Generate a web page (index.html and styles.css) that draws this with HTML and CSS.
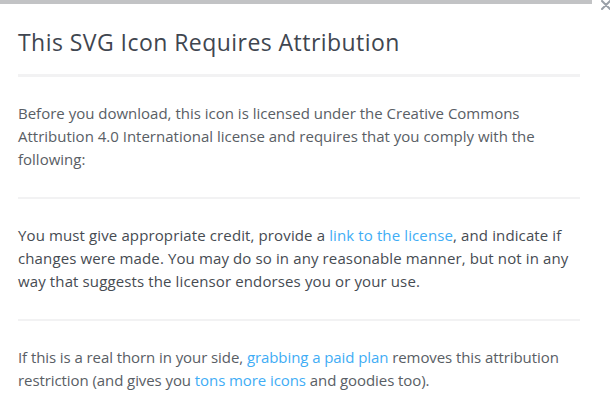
FILE: index.html
```html
<!DOCTYPE html>
<html>
<head>
<meta charset="utf-8">
<link rel="stylesheet" href="styles.css">
</head>
<body>
<div class="topbar"></div>
<button class="close" aria-label="Close">
  <svg width="10" height="10" viewBox="0 0 10 10"><path d="M1 1L9 9M9 1L1 9" stroke="#9aa0a8" stroke-width="2" stroke-linecap="round"/></svg>
</button>
<div class="modal">
  <h1 class="title">This SVG Icon Requires Attribution</h1>
  <hr class="rule rule-thick">
  <p class="text">Before you download, this icon is licensed under the Creative Commons Attribution 4.0 International license and requires that you comply with the following:</p>
  <hr class="rule">
  <p class="text strong">You must give appropriate credit, provide a <a href="#">link to the license</a>, and indicate if changes were made. You may do so in any reasonable manner, but not in any way that suggests the licensor endorses you or your use.</p>
  <hr class="rule">
  <p class="text last">If this is a real thorn in your side, <a href="#">grabbing a paid plan</a> removes this attribution restriction (and gives you <a href="#">tons more icons</a> and goodies too).</p>
</div>
</body>
</html>
```
FILE: styles.css
```css
html, body {
  margin: 0;
  padding: 0;
  background: #fff;
  overflow: hidden;
}
body {
  font-family: "Open Sans", "Lato", sans-serif;
  width: 610px;
  height: 407px;
  position: relative;
}
.topbar {
  height: 4px;
  width: 592px;
  background: #c2c3c5;
}
.close {
  position: absolute;
  top: 0;
  left: 601px;
  padding: 0;
  border: 0;
  background: none;
  line-height: 0;
}
.modal {
  padding: 0 30px 0 18px;
}
.title {
  margin: 0;
  padding-top: 23px;
  font-size: 23px;
  letter-spacing: 0.45px;
  font-weight: 400;
  color: #3f4650;
  line-height: 30px;
}
.rule {
  border: 0;
  height: 2px;
  background: #f2f2f3;
  margin: 0;
}
.rule-thick {
  height: 3px;
  margin-top: 17px;
}
.text {
  margin: 0;
  padding: 25px 0 26px;
  font-size: 15px;
  line-height: 23px;
  color: #595e65;
}
.text.strong {
  color: #464b52;
  letter-spacing: 0.12px;
}
.text.last {
  letter-spacing: -0.08px;
}
.text a {
  color: #3fadf5;
  text-decoration: none;
}
```
